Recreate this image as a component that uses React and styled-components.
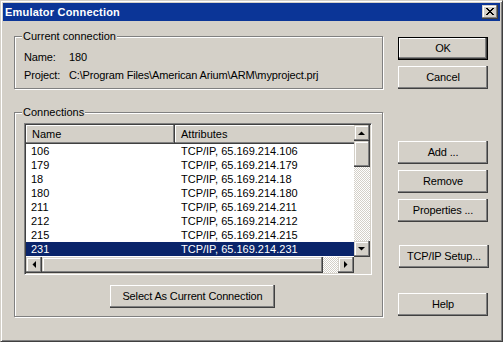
import React from "react";
import styled, { createGlobalStyle, css } from "styled-components";

const GlobalStyle = createGlobalStyle`
  html, body { margin: 0; padding: 0; background: #d4d0c8; }
  body { font-family: "Liberation Sans", Arial, sans-serif; font-size: 11px; color: #000; }
  * { box-sizing: border-box; }
`;

const raised = css`
  box-shadow: inset -1px -1px 0 #404040, inset -2px -2px 0 #808080, inset 1px 1px 0 #fff;
`;

const raisedScroll = css`
  box-shadow: inset -1px -1px 0 #404040, inset -2px -2px 0 #808080, inset 1px 1px 0 #d4d0c8, inset 2px 2px 0 #fff;
`;

const Window = styled.div`
  width: 503px;
  height: 342px;
  background: #d4d0c8;
  border: 1px solid;
  border-color: #d4d0c8 #404040 #404040 #d4d0c8;
  box-shadow: inset 1px 1px 0 #fff, inset -1px -1px 0 #808080;
  padding: 2px;
  display: flex;
  flex-direction: column;
`;

const TitleBar = styled.div`
  height: 18px;
  flex: none;
  background: #0b3597;
  display: flex;
  align-items: center;
  justify-content: space-between;
  padding: 0 2px;
`;

const TitleText = styled.span`
  color: #fff;
  font-weight: bold;
  font-size: 11px;
  letter-spacing: 0.2px;
`;

const CloseButton = styled.div`
  width: 16px;
  height: 14px;
  background: #d4d0c8;
  ${raisedScroll};
  display: flex;
  align-items: center;
  justify-content: center;
  padding: 0 1px 1px 0;
`;

const Body = styled.div`
  flex: 1;
  display: flex;
  padding: 15px 0 0 11px;
`;

const LeftColumn = styled.div`
  display: flex;
  flex-direction: column;
  gap: 23px;
`;

const GroupBox = styled.div`
  position: relative;
  width: 369px;
  height: ${(p) => p.$h}px;
  border: 1px solid #808080;
  box-shadow: inset 1px 1px 0 #fff, 1px 1px 0 #fff;
  padding: ${(p) => p.$pad};
  display: flex;
  flex-direction: column;
`;

const Legend = styled.span`
  position: absolute;
  top: -7px;
  left: 7px;
  padding: 0 1px;
  line-height: 13px;
  background: #d4d0c8;
`;

const InfoGrid = styled.div`
  display: grid;
  grid-template-columns: 45px auto;
  grid-auto-rows: 18px;
  align-items: center;
  letter-spacing: -0.15px;
`;

const ListView = styled.div`
  width: 348px;
  height: 152px;
  border: 1px solid;
  border-color: #808080 #fff #fff #808080;
  box-shadow: inset 1px 1px 0 #404040, inset -1px -1px 0 #d4d0c8;
  padding: 1px;
  display: grid;
  grid-template-columns: 328px 16px;
  grid-template-rows: 132px 16px;
  flex: none;
`;

const ListContent = styled.div`
  background: #fff;
  overflow: hidden;
`;

const HeaderRow = styled.div`
  display: flex;
  height: 19px;
  width: 349px;
`;

const HeaderCell = styled.div`
  flex: none;
  width: ${(p) => p.$w}px;
  height: 19px;
  background: #d4d0c8;
  ${raised};
  padding-left: 6px;
  display: flex;
  align-items: center;
  padding-bottom: 1px;
`;

const Row = styled.div`
  display: flex;
  height: 14px;
  width: 349px;
  align-items: center;
  background: ${(p) => (p.$selected ? "#0a246a" : "transparent")};
  color: ${(p) => (p.$selected ? "#fff" : "#000")};
`;

const Cell = styled.div`
  flex: none;
  width: ${(p) => p.$w}px;
  padding-left: ${(p) => p.$pl}px;
  white-space: nowrap;
`;

const checker = css`
  background-color: #fff;
  background-image: conic-gradient(#d4d0c8 25%, #fff 0 50%, #d4d0c8 0 75%, #fff 0);
  background-size: 2px 2px;
`;

const VScroll = styled.div`
  display: flex;
  flex-direction: column;
  ${checker};
`;

const HScroll = styled.div`
  display: flex;
  ${checker};
`;

const ScrollBtn = styled.div`
  flex: none;
  width: 16px;
  height: 16px;
  background: #d4d0c8;
  ${raisedScroll};
  display: flex;
  align-items: center;
  justify-content: center;
  padding: 0 1px 1px 0;
`;

const Thumb = styled.div`
  flex: none;
  width: ${(p) => p.$w};
  height: ${(p) => p.$h};
  background: #d4d0c8;
  ${raisedScroll};
`;

const Corner = styled.div`
  background: #d4d0c8;
`;

const RightColumn = styled.div`
  display: flex;
  flex-direction: column;
  margin-left: 15px;
`;

const Button = styled.div`
  width: ${(p) => p.$w || 90}px;
  height: 23px;
  flex: none;
  margin-top: ${(p) => p.$mt || 0}px;
  margin-left: ${(p) => p.$ml || 0}px;
  background: #d4d0c8;
  display: flex;
  align-items: center;
  justify-content: center;
  padding-bottom: 1px;
  letter-spacing: -0.15px;
  ${(p) =>
    p.$default
      ? css`
          border: 1px solid #000;
          ${raised};
        `
      : raised};
`;

const Arrow = ({ dir }) => {
  const pts = {
    up: "0,4 7,4 3.5,0.5",
    down: "0,0 7,0 3.5,3.5",
    left: "4,0 4,7 0.5,3.5",
    right: "0,0 0,7 3.5,3.5",
  }[dir];
  const horiz = dir === "left" || dir === "right";
  return (
    <svg width={horiz ? 4 : 7} height={horiz ? 7 : 4} viewBox={horiz ? "0 0 4 7" : "0 0 7 4"}>
      <polygon points={pts} fill="#000" />
    </svg>
  );
};

const CloseIcon = () => (
  <svg width="8" height="7" viewBox="0 0 8 7" shapeRendering="crispEdges">
    <path d="M0 0h2v1h-2zM6 0h2v1h-2zM1 1h2v1h-2zM5 1h2v1h-2zM2 2h4v1h-4zM3 3h2v1h-2zM2 4h4v1h-4zM1 5h2v1h-2zM5 5h2v1h-2zM0 6h2v1h-2zM6 6h2v1h-2z" fill="#000" />
  </svg>
);

const connections = [
  ["106", "65.169.214.106"],
  ["179", "65.169.214.179"],
  ["18", "65.169.214.18"],
  ["180", "65.169.214.180"],
  ["211", "65.169.214.211"],
  ["212", "65.169.214.212"],
  ["215", "65.169.214.215"],
  ["231", "65.169.214.231"],
];

export default function App() {
  return (
    <>
      <GlobalStyle />
      <Window>
        <TitleBar>
          <TitleText>Emulator Connection</TitleText>
          <CloseButton>
            <CloseIcon />
          </CloseButton>
        </TitleBar>
        <Body>
          <LeftColumn>
            <GroupBox $h={53} $pad="11px 0 0 9px">
              <Legend>Current connection</Legend>
              <InfoGrid>
                <span>Name:</span>
                <span>180</span>
                <span>Project:</span>
                <span>C:\Program Files\American Arium\ARM\myproject.prj</span>
              </InfoGrid>
            </GroupBox>
            <GroupBox $h={205} $pad="10px 0 0 9px">
              <Legend>Connections</Legend>
              <ListView>
                <ListContent>
                  <HeaderRow>
                    <HeaderCell $w={149}>Name</HeaderCell>
                    <HeaderCell $w={200}>Attributes</HeaderCell>
                  </HeaderRow>
                  {connections.map(([name, ip], i) => (
                    <Row key={name} $selected={i === connections.length - 1}>
                      <Cell $w={149} $pl={5}>{name}</Cell>
                      <Cell $w={200} $pl={6}>TCP/IP, {ip}</Cell>
                    </Row>
                  ))}
                </ListContent>
                <VScroll>
                  <ScrollBtn>
                    <Arrow dir="up" />
                  </ScrollBtn>
                  <Thumb $w="16px" $h="26px" />
                  <div style={{ flex: 1 }} />
                  <ScrollBtn>
                    <Arrow dir="down" />
                  </ScrollBtn>
                </VScroll>
                <HScroll>
                  <ScrollBtn>
                    <Arrow dir="left" />
                  </ScrollBtn>
                  <Thumb $w="281px" $h="16px" />
                  <div style={{ flex: 1 }} />
                  <ScrollBtn>
                    <Arrow dir="right" />
                  </ScrollBtn>
                </HScroll>
                <Corner />
              </ListView>
              <Button $w={165} $mt={10} $ml={86}>Select As Current Connection</Button>
            </GroupBox>
          </LeftColumn>
          <RightColumn>
            <Button $default $mt={1}>OK</Button>
            <Button $mt={6}>Cancel</Button>
            <Button $mt={52}>Add ...</Button>
            <Button $mt={6}>Remove</Button>
            <Button $mt={6}>Properties ...</Button>
            <Button $mt={23} $ml={1}>TCP/IP Setup...</Button>
            <Button $mt={25}>Help</Button>
          </RightColumn>
        </Body>
      </Window>
    </>
  );
}
